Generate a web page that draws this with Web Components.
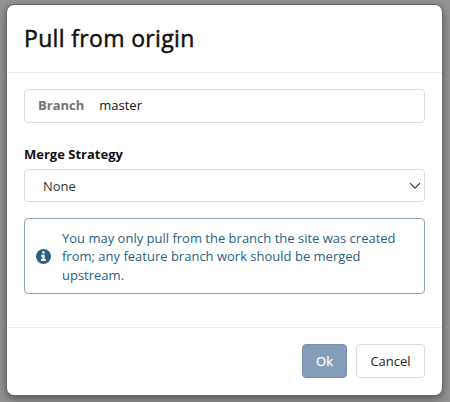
<!DOCTYPE html>
<html lang="en">
<head>
<meta charset="utf-8">
<title>Pull from origin</title>
<style>
html,body{margin:0;height:100%}
body{background:#949393;font-family:"Open Sans","Noto Sans",sans-serif;font-size:13px;color:#111;overflow:hidden}
</style>
</head>
<body>
<pull-dialog>
  <span slot="title">Pull from origin</span>
  <branch-field label="Branch">master</branch-field>
  <strategy-select label="Merge Strategy">None</strategy-select>
  <info-note>You may only pull from the branch the site was created from; any feature branch work should be merged upstream.</info-note>
  <dialog-button slot="actions" primary>Ok</dialog-button>
  <dialog-button slot="actions">Cancel</dialog-button>
</pull-dialog>
<script>
const define = (name, html) => customElements.define(name, class extends HTMLElement {
  constructor() {
    super();
    const root = this.attachShadow({ mode: 'open' });
    root.innerHTML = html;
    const label = root.querySelector('.label');
    if (label) label.textContent = this.getAttribute('label');
  }
});

define('pull-dialog', `
<style>
:host{display:flex;flex-direction:column;box-sizing:border-box;width:435px;height:390px;margin:5px 0 0 7px;background:#fff;border-radius:7px;box-shadow:0 0 0 1px #6a6a6a,0 3px 9px 1px rgba(0,0,0,.42)}
header{box-sizing:border-box;height:68px;padding:16px 17px 0;border-bottom:1px solid #ebebeb;font-size:23px;line-height:34px;letter-spacing:.34px;-webkit-text-stroke:.5px #111;color:#111}
main{flex:1;padding:16px 17px 0}
footer{box-sizing:border-box;height:68px;padding:16px 17px 0;border-top:1px solid #ededed;display:flex;justify-content:flex-end;gap:9px}
</style>
<header><slot name="title"></slot></header>
<main><slot></slot></main>
<footer><slot name="actions"></slot></footer>`);

define('branch-field', `
<style>
:host{box-sizing:border-box;display:flex;align-items:center;gap:15px;height:34px;padding:0 13px 2px;border:1px solid #dcdcdc;border-radius:4px}
.label{font-weight:700;color:#747474}
</style>
<span class="label"></span><span><slot></slot></span>`);

define('strategy-select', `
<style>
:host{display:block;margin-top:21px}
.label{display:block;font-weight:700;line-height:20px;height:25px}
.box{box-sizing:border-box;display:flex;justify-content:space-between;align-items:center;height:33px;padding:0 3px 0 18px;border:1px solid #dcdcdc;border-radius:4px;color:#333}
svg{display:block}
</style>
<span class="label"></span>
<div class="box"><span><slot></slot></span><svg width="12" height="8" viewBox="0 0 12 8" fill="none" stroke="#333" stroke-width="1.1"><path d="M1 1.2 6 6.2 11 1.2"/></svg></div>`);

define('info-note', `
<style>
:host{box-sizing:border-box;display:flex;align-items:center;gap:11px;height:76px;margin-top:16px;padding:1px 20px 0 11px;border:1px solid #8da5b8;border-radius:4px;color:#2a5f82;line-height:18.5px}
svg{flex:none}
</style>
<svg width="15" height="15" viewBox="0 0 16 16"><circle cx="8" cy="8" r="8" fill="#2a5f82"/><path fill="#fff" d="M6.7 2.5h2.6v2.4H6.7zM5.5 6.2h3.8v4.5h1.2v2h-5v-2h1.2V8.2H5.5z"/></svg>
<span><slot></slot></span>`);

define('dialog-button', `
<style>
:host{box-sizing:border-box;height:34px;width:69px;display:flex;align-items:center;justify-content:center;border:1px solid #dcdcdc;border-radius:4px;background:#fff;color:#222}
:host([primary]){width:45px;background:#849db8;border-color:#7893b1;color:#fff;-webkit-text-stroke:.25px #fff}
</style><slot></slot>`);
</script>
</body>
</html>
